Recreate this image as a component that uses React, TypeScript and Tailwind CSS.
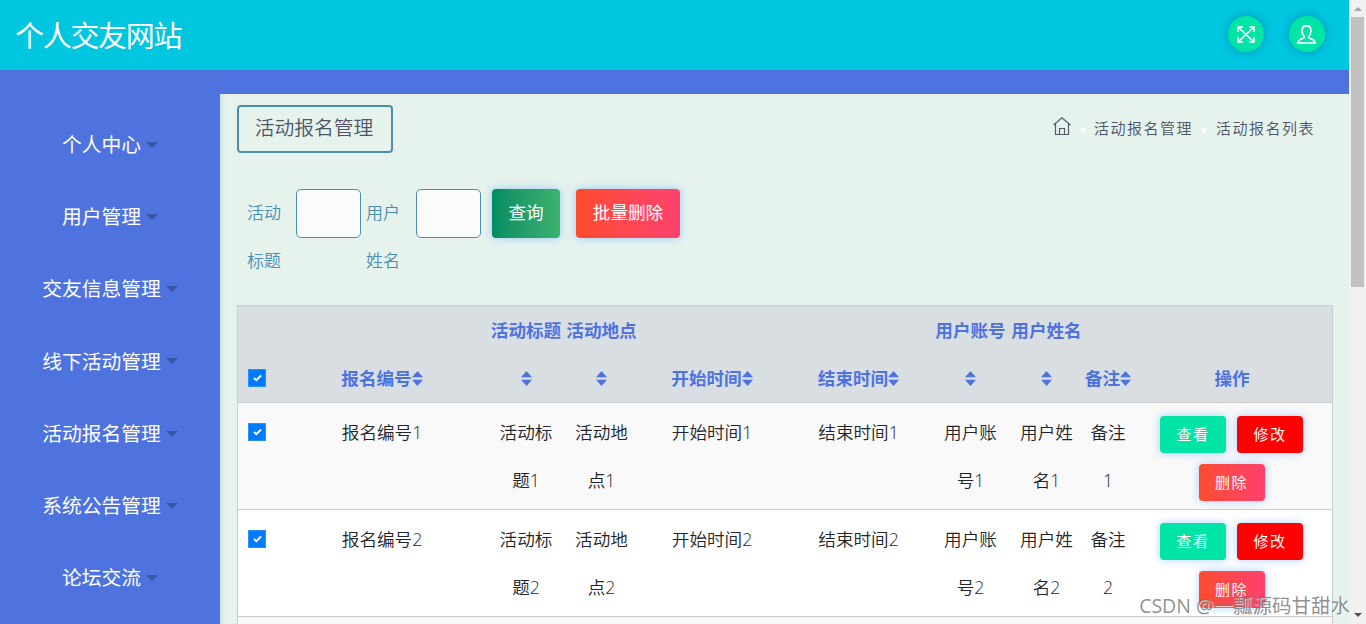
import type { ReactNode } from 'react'

const menuItems = ['个人中心', '用户管理', '交友信息管理', '线下活动管理', '活动报名管理', '系统公告管理', '论坛交流']

interface Column {
  label: string
  width: string
  // narrow columns push the sort icon to a second line
  wraps?: boolean
}

const columns: Column[] = [
  { label: '报名编号', width: 'w-[212px]' },
  { label: '活动标题', width: 'w-[76px]', wraps: true },
  { label: '活动地点', width: 'w-[75px]', wraps: true },
  { label: '开始时间', width: 'w-[146px]' },
  { label: '结束时间', width: 'w-[147px]' },
  { label: '用户账号', width: 'w-[77px]', wraps: true },
  { label: '用户姓名', width: 'w-[75px]', wraps: true },
  { label: '备注', width: 'w-[48px]' },
]

const rows = [1, 2]

function SortIcon() {
  return (
    <svg viewBox="0 0 11 15" className="inline-block h-[15px] w-[11px] align-[-1px]" fill="currentColor">
      <path d="M5.5 0 11 6.200H0zM5.5 15 0 8.800h11z" />
    </svg>
  )
}

function FullscreenIcon() {
  return (
    <svg viewBox="0 0 18 17" className="h-[17px] w-[18px]" fill="none" stroke="#fff" strokeWidth="1.7">
      <path d="M1 6V1h5M12 1h5v5M17 11v5h-5M6 16H1v-5M1 1l16 15M17 1 1 16" />
    </svg>
  )
}

function UserIcon() {
  return (
    <svg viewBox="0 0 19 19" className="mr-px h-[19px] w-[19px]" fill="none" stroke="#fff" strokeWidth="1.7">
      <path d="M7.4 11.8C5.5 9.800 5 7.500 5.100 5.500 5.200 2.600 6.800.9 9.500.9s4.300 1.700 4.400 4.600c.1 2-.4 4.300-2.300 6.300 0 1 .4 1.300 1.600 1.700 3 .9 4.700 1.900 5 4.600H.8c.3-2.700 2-3.700 5-4.600 1.200-.4 1.600-.7 1.600-1.700z" />
    </svg>
  )
}

function HomeIcon() {
  return (
    <svg viewBox="0 0 18 18" className="h-[18px] w-[18px]" fill="none" stroke="#555a6b" strokeWidth="1.2">
      <path d="M.5 8 9 .9 17.500 8M2.500 6.500v11h13v-11M6.500 17.500v-6h5v6" />
    </svg>
  )
}

function StarIcon() {
  return (
    <svg viewBox="0 0 10 10" className="h-[8px] w-[8px]" fill="#fff">
      <path d="m5 0 1.300 3.500H10L7.100 5.900 8.200 9.700 5 7.500 1.800 9.700l1.100-3.800L0 3.500h3.700z" />
    </svg>
  )
}

function CaretIcon() {
  return (
    <svg viewBox="0 0 12 6" className="h-[6px] w-[12px]" fill="#3a56a7">
      <path d="M0 0h12L6 6z" />
    </svg>
  )
}

function CheckedBox() {
  return (
    <span className="flex h-[18px] w-[18px] items-center justify-center border border-[#2b8fff] bg-[#007bff]">
      <svg viewBox="0 0 10 8" className="h-[8px] w-[9px]" fill="none" stroke="#fff" strokeWidth="2">
        <path d="m1 3.900 2.600 2.500L9 1.200" />
      </svg>
    </span>
  )
}

function RoundButton({ children }: { children: ReactNode }) {
  return (
    <button type="button" className="flex h-9 w-9 items-center justify-center rounded-full bg-[#00e4a5] shadow-[0_0_8px_rgba(0,70,110,0.4)]">
      {children}
    </button>
  )
}

function RowButton({ className, children }: { className: string; children: ReactNode }) {
  return (
    <button type="button" className={`h-[37px] w-[66px] rounded-[4px] text-[15px] leading-none font-normal tracking-[1.500px] text-white shadow-[0_0_8px_rgba(100,170,255,0.55)] ${className}`}>
      {children}
    </button>
  )
}

function SearchField({ first, second }: { first: string; second: string }) {
  return (
    <>
      <label className="w-[35px] text-[17px] leading-[48px] text-[#4b8db0]">
        {first}
        <br />
        {second}
      </label>
      <input type="text" className="h-[49px] w-[65px] rounded-[5px] border border-[#4b8db0] bg-[#fafcfb]" />
    </>
  )
}

function Scrollbar() {
  return (
    <div className="flex w-[17px] shrink-0 flex-col items-center justify-between bg-[#f1f1f1] pt-[7px] pb-[7px]">
      <div className="flex flex-col items-center">
        <svg viewBox="0 0 8 4" className="h-[4px] w-[8px]" fill="#a3a3a3">
          <path d="M4 0 8 4H0z" />
        </svg>
        <div className="mt-[6px] h-[270px] w-[13px] bg-[#c1c1c1]" />
      </div>
      <svg viewBox="0 0 8 4" className="h-[4px] w-[8px]" fill="#505050">
        <path d="M0 0h8L4 4z" />
      </svg>
    </div>
  )
}

export default function App() {
  return (
    <div className="relative flex h-[624px] w-[1366px] overflow-hidden bg-[#4e73df] font-['Open_Sans','Noto_Sans_CJK_SC',sans-serif] font-[350]">
      <div className="flex min-w-0 flex-1 flex-col">
        <header className="flex h-[70px] shrink-0 items-center justify-between bg-[#00c6e0] pr-6 pl-[15px]">
          <h1 className="text-[29px] leading-none font-normal tracking-[-1.300px] text-white">个人交友网站</h1>
          <div className="flex gap-[25px] pb-[2px]">
            <RoundButton>
              <FullscreenIcon />
            </RoundButton>
            <RoundButton>
              <UserIcon />
            </RoundButton>
          </div>
        </header>

        <div className="flex min-h-0 flex-1 pt-6">
          <nav className="flex w-[220px] shrink-0 flex-col pt-[14.400px]">
            {menuItems.map((item) => (
              <a key={item} className="flex h-[72.300px] shrink-0 items-center justify-center gap-[5px] text-[19.800px] font-normal text-white">
                {item}
                <CaretIcon />
              </a>
            ))}
          </nav>

          <main className="min-w-0 flex-1 bg-[#e6f3ed] pr-4 pl-[17px] shadow-[inset_6px_0_6px_-6px_rgba(78,115,180,0.25)]">
            <div className="flex items-start justify-between pt-[11px]">
              <h2 className="flex h-12 w-[156px] items-center justify-center rounded-[4px] border-2 border-[#4b8db0] pr-[2px] pb-[2px] text-[19.800px] leading-none text-[#4f5467]">
                活动报名管理
              </h2>
              <div className="flex items-center pt-[12px] pr-[18px] text-[15px] leading-[22px] tracking-[1.500px] text-[#4f5467]">
                <span className="pb-[4px]">
                  <HomeIcon />
                </span>
                <span className="mr-[7px] ml-[8px] pt-[4px]">
                  <StarIcon />
                </span>
                <span>活动报名管理</span>
                <span className="mr-[8px] ml-[7px] pt-[4px]">
                  <StarIcon />
                </span>
                <span>活动报名列表</span>
              </div>
            </div>

            <form className="mt-9 flex h-[116px] items-start pl-[10px]">
              <div className="flex gap-[14px]">
                <SearchField first="活动" second="标题" />
              </div>
              <div className="ml-[5px] flex gap-[15px]">
                <SearchField first="用户" second="姓名" />
              </div>
              <button type="button" className="ml-[11px] h-[49px] w-[68px] rounded-[4px] bg-linear-to-r from-[#008c62] to-[#3cb371] pb-[2px] text-[17.600px] font-normal text-white shadow-[0_0_8px_rgba(100,170,255,0.6)]">
                查询
              </button>
              <button type="button" className="ml-4 h-[49px] w-[104px] rounded-[4px] bg-linear-to-r from-[#ff4b2b] to-[#ff416c] pb-[2px] text-[17.600px] font-normal text-white shadow-[0_0_8px_rgba(100,170,255,0.6)]">
                批量删除
              </button>
            </form>

            <div className="w-[1096px] border border-[#ccc]">
              <table className="w-full table-fixed border-collapse text-center text-[17.600px] leading-[48px] text-[#212529]">
                <thead>
                  <tr className="h-[96px] border-b border-[#ccc] bg-[#d9dee2] align-bottom font-bold text-[#4e73df]">
                    <th className="w-[38px] pb-[15px] pl-[10px]">
                      <CheckedBox />
                    </th>
                    {columns.map((column) => (
                      <th key={column.label} className={`whitespace-nowrap ${column.width}`}>
                        {column.label}
                        {column.wraps ? <br /> : null}
                        <SortIcon />
                      </th>
                    ))}
                    <th className="w-[200px]">操作</th>
                  </tr>
                </thead>
                <tbody>
                  {rows.map((n) => (
                    <tr key={n} className="h-[107px] border-b border-[#ccc] bg-white align-top odd:bg-[#f9f9f9]">
                      <td className="pt-[20px] pl-[10px]">
                        <CheckedBox />
                      </td>
                      {columns.map((column) => (
                        <td key={column.label} className="px-[5px] pt-[5px] break-all">
                          {`${column.label}${n}`}
                        </td>
                      ))}
                      <td className="pt-[13px] pr-px">
                        <div className="flex flex-wrap justify-center gap-[11px]">
                          <RowButton className="bg-[#00e4a5]">查看</RowButton>
                          <RowButton className="bg-[#ff0000]">修改</RowButton>
                          <RowButton className="bg-linear-to-r from-[#ff4b2b] to-[#ff416c]">删除</RowButton>
                        </div>
                      </td>
                    </tr>
                  ))}
                  <tr className="h-[107px] bg-[#f9f9f9]">
                    <td colSpan={10} />
                  </tr>
                </tbody>
              </table>
            </div>
          </main>
        </div>
      </div>

      <Scrollbar />

      <div className="absolute right-[16px] bottom-[4px] text-[19.500px] leading-7 font-normal whitespace-nowrap text-[#6b6b6b]/75 [text-shadow:1px_1px_1px_rgba(255,255,255,0.8)]">
        CSDN @一瓢源码甘甜水
      </div>
    </div>
  )
}
